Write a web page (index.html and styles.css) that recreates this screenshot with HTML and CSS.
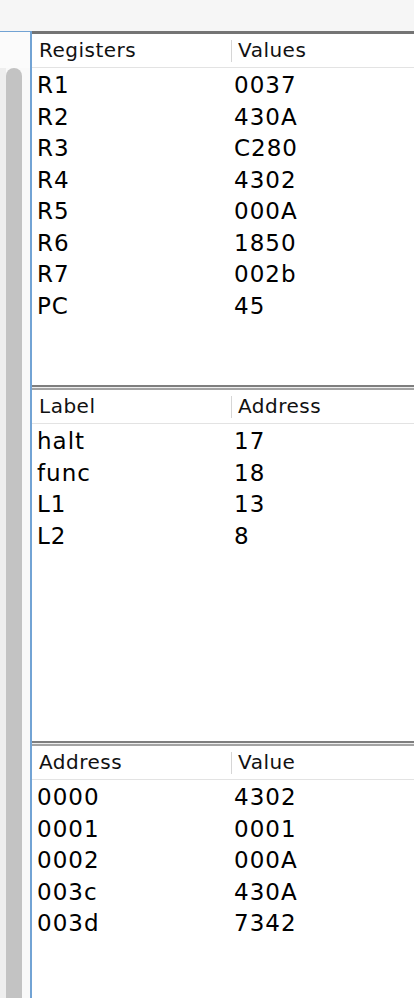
FILE: index.html
```html
<!DOCTYPE html>
<html>
<head>
<meta charset="utf-8">
<link rel="stylesheet" href="styles.css">
</head>
<body>
<div class="topbar"></div>
<div class="main">
  <aside class="side">
    <div class="track"><div class="thumb"></div></div>
  </aside>
  <div class="panels">
    <section class="panel">
      <div class="thead"><div class="th">Registers</div><div class="th sep">Values</div></div>
      <div class="tbody">
        <div class="tr"><span class="td">R1</span><span class="td">0037</span></div>
        <div class="tr"><span class="td">R2</span><span class="td">430A</span></div>
        <div class="tr"><span class="td">R3</span><span class="td">C280</span></div>
        <div class="tr"><span class="td">R4</span><span class="td">4302</span></div>
        <div class="tr"><span class="td">R5</span><span class="td">000A</span></div>
        <div class="tr"><span class="td">R6</span><span class="td">1850</span></div>
        <div class="tr"><span class="td">R7</span><span class="td">002b</span></div>
        <div class="tr"><span class="td">PC</span><span class="td">45</span></div>
      </div>
    </section>
    <div class="divider"></div>
    <section class="panel">
      <div class="thead"><div class="th">Label</div><div class="th sep">Address</div></div>
      <div class="tbody">
        <div class="tr"><span class="td">halt</span><span class="td">17</span></div>
        <div class="tr"><span class="td">func</span><span class="td">18</span></div>
        <div class="tr"><span class="td">L1</span><span class="td">13</span></div>
        <div class="tr"><span class="td">L2</span><span class="td">8</span></div>
      </div>
    </section>
    <div class="divider"></div>
    <section class="panel last">
      <div class="thead"><div class="th">Address</div><div class="th sep">Value</div></div>
      <div class="tbody">
        <div class="tr"><span class="td">0000</span><span class="td">4302</span></div>
        <div class="tr"><span class="td">0001</span><span class="td">0001</span></div>
        <div class="tr"><span class="td">0002</span><span class="td">000A</span></div>
        <div class="tr"><span class="td">003c</span><span class="td">430A</span></div>
        <div class="tr"><span class="td">003d</span><span class="td">7342</span></div>
      </div>
    </section>
  </div>
</div>
</body>
</html>
```

FILE: styles.css
```css
html, body {
  margin: 0;
  padding: 0;
}
body {
  background: #f6f6f6;
  font-family: "DejaVu Sans", "Liberation Sans", sans-serif;
  color: #000;
  width: 414px;
  height: 998px;
  overflow: hidden;
}
.topbar {
  height: 31px;
  background: #f6f6f6;
}
.main {
  display: flex;
  height: 967px;
}
.side {
  width: 30px;
  flex: 0 0 30px;
  border-top: 1px solid #72a3d4;
  border-right: 2px solid #72a3d4;
  background: #fbfbfb;
  display: flex;
  flex-direction: column;
}
.track {
  margin-top: 36px;
  flex: 1;
  display: flex;
  background: linear-gradient(to right, #eeeeee 0, #eeeeee 6px, #f9f9f9 6px);
  padding-left: 6px;
}
.thumb {
  width: 16px;
  background: #c3c3c3;
  border-radius: 8px 8px 0 0;
}
.panels {
  flex: 1;
  display: flex;
  flex-direction: column;
  border-top: 3px solid #747474;
  background: #fff;
  min-width: 0;
}
.panel {
  height: 351px;
  flex: 0 0 351px;
  background: #fff;
  display: flex;
  flex-direction: column;
}
.panel.last {
  flex: 1 1 auto;
}
.divider {
  flex: 0 0 auto;
  height: 1px;
  border-top: 2px solid #7e7e7e;
  border-bottom: 2px solid #a3a3a3;
  background: #eeeeee;
}
.thead {
  display: grid;
  grid-template-columns: 199px 1fr;
  height: 33px;
  border-bottom: 1px solid #e3e3e3;
  background: #fff;
}
.th {
  position: relative;
  font-size: 20px;
  letter-spacing: 0.5px;
  line-height: 33px;
  padding-left: 7px;
  color: #111;
  white-space: nowrap;
}
.th.sep::before {
  content: "";
  position: absolute;
  left: 0;
  top: 6px;
  height: 22px;
  width: 1px;
  background: #d6d6d6;
}
.tbody {
  padding-top: 2px;
  flex: 1;
}
.tr {
  display: grid;
  grid-template-columns: 199px 1fr;
  height: 31.5px;
}
.td {
  font-size: 23px;
  letter-spacing: 1px;
  line-height: 31px;
  padding-left: 5px;
  white-space: nowrap;
  color: #000;
}
.td + .td {
  padding-left: 3px;
}
```
